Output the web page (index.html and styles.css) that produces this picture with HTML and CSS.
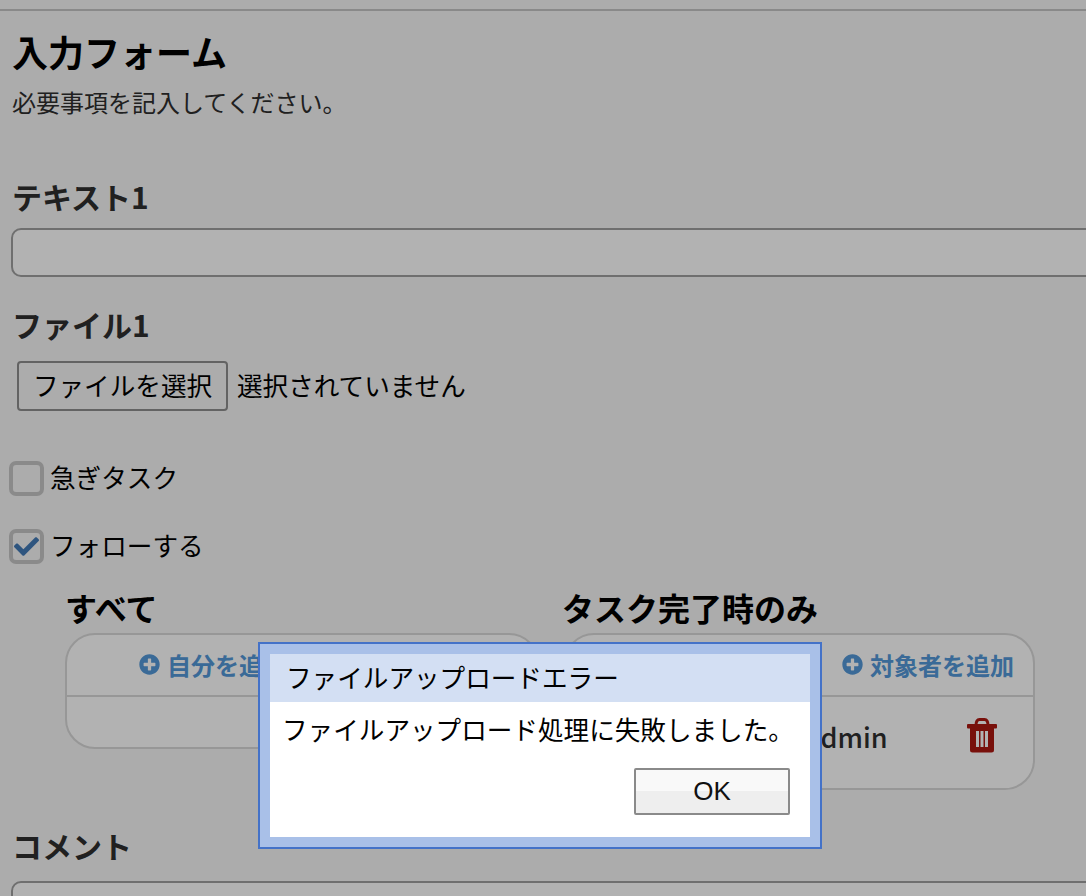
FILE: index.html
```html
<!DOCTYPE html>
<html>
<head>
    <title>入力フォーム</title>
    <link rel="stylesheet" href="styles.css">
</head>
<body>
    <div class="top-line"></div>

    <form class="form-section">
        <h1>入力フォーム</h1>
        <p class="lead">必要事項を記入してください。</p>

        <label class="field-label label-text">テキスト1</label>
        <input type="text" class="text-input">

        <label class="field-label label-file">ファイル1</label>
        <div class="file-row">
            <button type="button" class="file-button">ファイルを選択</button>
            <span class="file-status">選択されていません</span>
        </div>

        <div class="check-row check-first">
            <span class="check-box"></span>
            <span class="check-text">急ぎタスク</span>
        </div>
        <div class="check-row check-second">
            <span class="check-box">
                <svg viewBox="0 0 512 512" class="check-mark"><path d="M173.898 439.404l-166.4-166.4c-9.997-9.997-9.997-26.206 0-36.204l36.203-36.204c9.997-9.998 26.207-9.998 36.204 0L192 312.69 432.095 72.596c9.997-9.997 26.207-9.997 36.204 0l36.203 36.204c9.997 9.997 9.997 26.206 0 36.204l-294.4 294.401c-9.998 9.997-26.207 9.997-36.204-.001z"/></svg>
            </span>
            <span class="check-text">フォローする</span>
        </div>

        <div class="notify-groups">
            <div class="group group-all">
                <h2>すべて</h2>
                <div class="group-card">
                    <div class="group-head">
                        <a href="#" class="add-link">
                            <svg viewBox="0 0 512 512" class="plus-icon"><path d="M256 8C119 8 8 119 8 256s111 248 248 248 248-111 248-248S393 8 256 8zm144 276c0 6.6-5.4 12-12 12h-92v92c0 6.6-5.4 12-12 12h-56c-6.6 0-12-5.4-12-12v-92h-92c-6.6 0-12-5.4-12-12v-56c0-6.6 5.4-12 12-12h92v-92c0-6.6 5.4-12 12-12h56c6.6 0 12 5.4 12 12v92h92c6.6 0 12 5.4 12 12v56z"/></svg>
                            自分を追加
                        </a>
                        <a href="#" class="add-link">
                            <svg viewBox="0 0 512 512" class="plus-icon"><path d="M256 8C119 8 8 119 8 256s111 248 248 248 248-111 248-248S393 8 256 8zm144 276c0 6.6-5.4 12-12 12h-92v92c0 6.6-5.4 12-12 12h-56c-6.6 0-12-5.4-12-12v-92h-92c-6.6 0-12-5.4-12-12v-56c0-6.6 5.4-12 12-12h92v-92c0-6.6 5.4-12 12-12h56c6.6 0 12 5.4 12 12v92h92c6.6 0 12 5.4 12 12v56z"/></svg>
                            対象者を追加
                        </a>
                    </div>
                    <div class="group-empty"></div>
                </div>
            </div>
            <div class="group group-done">
                <h2>タスク完了時のみ</h2>
                <div class="group-card">
                    <div class="group-head">
                        <a href="#" class="add-link">
                            <svg viewBox="0 0 512 512" class="plus-icon"><path d="M256 8C119 8 8 119 8 256s111 248 248 248 248-111 248-248S393 8 256 8zm144 276c0 6.6-5.4 12-12 12h-92v92c0 6.6-5.4 12-12 12h-56c-6.6 0-12-5.4-12-12v-92h-92c-6.6 0-12-5.4-12-12v-56c0-6.6 5.4-12 12-12h92v-92c0-6.6 5.4-12 12-12h56c6.6 0 12 5.4 12 12v92h92c6.6 0 12 5.4 12 12v56z"/></svg>
                            自分を追加
                        </a>
                        <a href="#" class="add-link">
                            <svg viewBox="0 0 512 512" class="plus-icon"><path d="M256 8C119 8 8 119 8 256s111 248 248 248 248-111 248-248S393 8 256 8zm144 276c0 6.6-5.4 12-12 12h-92v92c0 6.6-5.4 12-12 12h-56c-6.6 0-12-5.4-12-12v-92h-92c-6.6 0-12-5.4-12-12v-56c0-6.6 5.4-12 12-12h92v-92c0-6.6 5.4-12 12-12h56c6.6 0 12 5.4 12 12v92h92c6.6 0 12 5.4 12 12v56z"/></svg>
                            対象者を追加
                        </a>
                    </div>
                    <div class="user-row">
                        <span class="user-name">admin</span>
                        <svg viewBox="0 0 30 35" class="trash-icon">
                            <path d="M9 7.500C9 3 10.500 1.500 12.500 1.500h5c2 0 3.500 1.500 3.500 6" fill="none" class="trash-handle"/>
                            <rect x="0" y="6" width="30" height="4.500" rx="1"/>
                            <path fill-rule="evenodd" d="M3 10h24v22a2.500 2.500 0 0 1-2.500 2.500h-19A2.500 2.500 0 0 1 3 32zM9 13v16h3V13zM13.500 13v16h3V13zM18 13v16h3V13z"/>
                        </svg>
                    </div>
                </div>
            </div>
        </div>

        <label class="field-label label-comment">コメント</label>
        <textarea class="comment-input"></textarea>
    </form>

    <!-- Error dialog -->
    <div class="overlay">
        <div class="dialog">
            <div class="dialog-inner">
                <div class="dialog-title">ファイルアップロードエラー</div>
                <div class="dialog-body">
                    <p>ファイルアップロード処理に失敗しました。</p>
                    <div class="dialog-actions">
                        <button type="button" class="ok-button">OK</button>
                    </div>
                </div>
            </div>
        </div>
    </div>
</body>
</html>
```

FILE: styles.css
```css
html {
    overflow: hidden;
}

body {
    font-family: "Noto Sans CJK JP", "Liberation Sans", sans-serif;
    margin: 0;
    padding: 0;
    height: 896px;
    overflow: hidden;
    background-color: #f6f6f6;
    color: #2e2e2e;
}

.top-line {
    height: 2px;
    margin-top: 9px;
    background-color: #c4c4c4;
}

.form-section {
    width: 1200px;
    padding-left: 12px;
}

h1 {
    font-size: 36px;
    line-height: 50px;
    margin: 15px 0 0;
    color: #000;
}

.lead {
    font-size: 24px;
    line-height: 34px;
    margin: 9px 0 0;
}

.field-label {
    display: block;
    font-size: 30px;
    line-height: 40px;
    font-weight: bold;
}

.label-text {
    margin-top: 57px;
}

.text-input {
    display: block;
    width: 100%;
    height: 49px;
    box-sizing: border-box;
    margin: 12px 0 0 -1px;
    border: 2px solid #a0a0a0;
    border-radius: 10px;
    background-color: #fff;
}

.label-file {
    margin-top: 27px;
}

.file-row {
    display: flex;
    align-items: center;
    gap: 9px;
    margin: 17px 0 0 5px;
    font-size: 25.6px;
    color: #000;
}

.file-status {
    padding-bottom: 4px;
}

.file-button {
    width: 211px;
    height: 50px;
    padding: 0 0 4px;
    font-family: inherit;
    font-size: 25.6px;
    color: #000;
    background-color: #f6f6f6;
    border: 2px solid #8f8f8f;
    border-radius: 4px;
}

.check-row {
    display: flex;
    align-items: center;
    gap: 6px;
    margin-left: -3px;
    font-size: 25.6px;
    line-height: 36px;
    color: #000;
}

.check-text {
    padding-bottom: 3px;
}

.check-first {
    margin-top: 48px;
}

.check-second {
    margin-top: 29px;
}

.check-box {
    display: flex;
    align-items: center;
    justify-content: center;
    width: 35px;
    height: 35px;
    box-sizing: border-box;
    border: 4px solid #c6c6c6;
    border-radius: 7px;
}

.check-mark {
    width: 25px;
    height: 25px;
    fill: #437ab7;
}

.notify-groups {
    display: flex;
    align-items: flex-start;
    gap: 25px;
    margin: 19px 0 0 53px;
}

.group h2 {
    font-size: 32px;
    line-height: 44px;
    margin: 0 0 4px;
    color: #000;
}

.group-done h2 {
    margin-left: -2px;
}

.group-all {
    width: 474px;
}

.group-done {
    width: 471px;
}

.group-card {
    box-sizing: border-box;
    background-color: #fff;
    border: 2px solid #d8d8d8;
    border-radius: 30px;
}

.group-head {
    display: flex;
    align-items: center;
    justify-content: space-between;
    height: 62px;
    box-sizing: border-box;
    padding: 0 19px 2px 72px;
    border-bottom: 2px solid #d8d8d8;
}

.add-link {
    display: flex;
    align-items: center;
    gap: 7px;
    font-size: 24px;
    font-weight: bold;
    color: #5398d8;
    text-decoration: none;
    white-space: nowrap;
}

.plus-icon {
    width: 21px;
    height: 21px;
    fill: #5398d8;
}

.group-empty {
    height: 50px;
}

.user-row {
    display: flex;
    align-items: center;
    justify-content: space-between;
    height: 91px;
    box-sizing: border-box;
    padding: 0 36px 14px 239px;
}

.user-name {
    font-size: 27px;
    font-weight: 500;
    margin-top: 2px;
}

.trash-icon {
    width: 30px;
    height: 35px;
    fill: #ad1710;
}

.trash-handle {
    stroke: #ad1710;
    stroke-width: 3;
}

.label-comment {
    margin-top: 35px;
}

.comment-input {
    display: block;
    width: 100%;
    height: 120px;
    box-sizing: border-box;
    margin: 16px 0 0 -1px;
    border: 2px solid #a0a0a0;
    border-radius: 10px;
    background-color: #fff;
}

.overlay {
    position: fixed;
    top: 0;
    right: 0;
    bottom: 0;
    left: 0;
    background-color: rgba(0, 0, 0, 0.3);
}

.dialog {
    position: absolute;
    left: 258px;
    top: 642px;
    width: 564px;
    height: 207px;
    box-sizing: border-box;
    padding: 10px;
    background-color: #a9c0e8;
    border: 2px solid #4472c8;
}

.dialog-inner {
    height: 100%;
    background-color: #fff;
    color: #000;
}

.dialog-title {
    height: 48px;
    line-height: 46px;
    padding-left: 16px;
    font-size: 25.6px;
    background-color: #d3dff3;
}

.dialog-body {
    font-size: 25.6px;
}

.dialog-body p {
    margin: 0;
    padding: 8px 0 0 12px;
    line-height: 38px;
    white-space: nowrap;
}

.dialog-actions {
    display: flex;
    justify-content: flex-end;
    margin-top: 20px;
    padding-right: 20px;
}

.ok-button {
    width: 156px;
    height: 47px;
    padding: 0;
    font-family: "Liberation Sans", sans-serif;
    font-size: 26px;
    color: #111;
    background: linear-gradient(#f9f9f9 50%, #eeeeee 50%);
    border: 2px solid #8a8a8a;
    border-radius: 2px;
}
```
